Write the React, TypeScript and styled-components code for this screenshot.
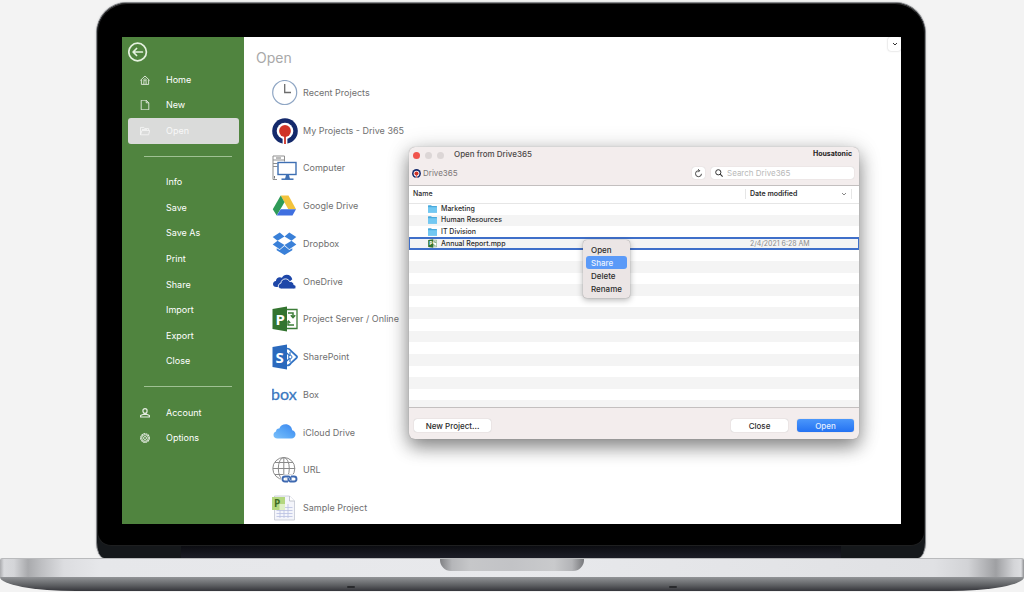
import React from "react";
import styled, { createGlobalStyle, css } from "styled-components";

const GlobalStyle = createGlobalStyle`
  * { box-sizing: border-box; }
  body { margin: 0; background: #f3f3f3; font-family: Inter, "Liberation Sans", sans-serif; }
  button, input { font-family: inherit; margin: 0; border: 0; padding: 0; }
  button { background: none; text-align: left; }
  ul { list-style: none; margin: 0; padding: 0; }
  svg { display: block; flex: none; }
`;

/* ---------- Laptop ---------- */

const Laptop = styled.div`
  padding-top: 2px;
  overflow: hidden;
`;

const Lid = styled.div`
  margin: 0 98px 0 96px;
  background: #15181b;
  border: 1px solid #85878a;
  border-bottom: 0;
  border-radius: 31px 31px 8px 8px / 31px 31px 16px 16px;
  box-shadow: 0 0 2px #c4c4c6;
`;

const Bezel = styled.div`
  background: #000;
  border: 1px solid #1e1f20;
  border-top-color: #333;
  border-radius: 30px 30px 14px 14px;
  padding: 33px 23px 21px 24px;
`;

const Hinge = styled.div`
  height: 12px;
  margin: 0 84px;
  background: linear-gradient(#0c0d12, #1c1d26);
`;

const Deck = styled.div`
  height: 19px;
  border-top: 1px solid #b9babc;
  border-radius: 2px 2px 0 0;
  background: linear-gradient(90deg, #aaabae 0, #d9dadd 4px, #d4d5d8 14px, #a9aaad 28px, #bfc0c3 42px, #dcdde0 64px, #e6e7ea 100px, #e8e9ec 50%, #e0e1e4 calc(100% - 90px), #d2d3d6 calc(100% - 56px), #9fa0a3 calc(100% - 28px), #d4d5d8 calc(100% - 10px), #dcdde0 calc(100% - 3px), #8f9093 100%);
`;

const Notch = styled.div`
  width: 144px;
  height: 12px;
  margin: 0 auto;
  border-radius: 0 0 11px 11px;
  background: linear-gradient(90deg, #808184, #b5b6b9 12px, #c6c7c9 30px, #c2c3c6 50%, #c9cacc 114px, #b3b4b7 132px, #77787b);
`;

const Underside = styled.div`
  display: flex;
  justify-content: space-between;
  align-items: flex-end;
  height: 14px;
  padding: 0 347px 3px;
  border-radius: 0 0 76px 76px / 0 0 14px 14px;
  background: linear-gradient(#929497, #5d5f62 60%, #34353a);
`;

const Foot = styled.span`
  width: 8px;
  height: 2px;
  border-radius: 4px;
  background: #292a2d;
`;

/* ---------- Application ---------- */

const Screen = styled.main`
  position: relative;
  display: flex;
  height: 487px;
  overflow: hidden;
  background: #fff;
`;

const Sidebar = styled.aside`
  flex: none;
  width: 122px;
  padding: 5px 5px 0 6px;
  background: #50843f;
`;

const BackButton = styled.button`
  display: block;
  height: 20px;
  color: #e4f1df;
`;

const NavList = styled.ul`
  display: grid;
  grid-auto-rows: 1fr;
  height: 384px;
  margin-top: 5px;
`;

const NavCell = styled.li`
  display: flex;
  align-items: center;
`;

const NavLink = styled.a<{ $active?: boolean }>`
  display: grid;
  grid-template-columns: 10px 1fr;
  column-gap: 16px;
  align-items: center;
  align-self: stretch;
  width: 100%;
  padding-left: 12px;
  border-radius: 3px;
  font-size: 9px;
  line-height: 12px;
  color: #fff;
  text-decoration: none;
  ${(p) => p.$active && css`background: #dadbda; color: #f8f8f8;`}
`;

const NavRule = styled.hr`
  width: 88px;
  margin: 0 0 0 16px;
  border: 0;
  border-top: 1px solid #9fc193;
`;

const Places = styled.section`
  flex: 1;
  padding: 13px 0 0 12px;
`;

const Heading = styled.h1`
  margin: 0;
  font-size: 14px;
  line-height: 16px;
  font-weight: 400;
  color: #a9a9a9;
`;

const PlaceList = styled.ul`
  display: grid;
  grid-auto-rows: 1fr;
  height: 453px;
  margin-top: 8px;
  padding-left: 16px;
`;

const Place = styled.button`
  display: flex;
  align-items: center;
  gap: 5px;
  height: 100%;
  font-size: 9px;
  line-height: 12px;
  color: #6f6f6f;
`;

const CollapseButton = styled.button`
  display: grid;
  place-items: center;
  align-self: flex-start;
  width: 13px;
  height: 14px;
  border-radius: 3px;
  background: #fff;
  box-shadow: 0 0 2px #bbb;
  color: #333;
`;

/* ---------- Dialog window ---------- */

const Dialog = styled.section`
  position: absolute;
  top: 110px;
  left: 287px;
  right: 42px;
  border-radius: 6px;
  background: #f3eded;
  color: #2c2c2c;
  font-size: 7px;
  line-height: 10px;
  box-shadow: 0 0 1px #8a8a8a, 0 8px 18px rgba(0, 0, 0, 0.42), 0 2px 24px rgba(0, 0, 0, 0.16);
`;

const TitleBar = styled.header`
  display: flex;
  align-items: flex-start;
  height: 15px;
  padding: 2px 7px 0 4px;
`;

const Lights = styled.div`
  display: flex;
  gap: 5px;
  margin: 3px 10px 0 0;
`;

const Light = styled.button<{ $color: string }>`
  width: 7px;
  height: 7px;
  border-radius: 50%;
  background: ${(p) => p.$color};
`;

const DialogTitle = styled.h2`
  flex: 1;
  margin: 0;
  font-size: 8px;
  font-weight: 500;
  color: #4b4747;
`;

const Brand = styled.strong`
  font-size: 7px;
  font-weight: 700;
  color: #262323;
`;

const ToolBar = styled.div`
  display: flex;
  align-items: center;
  height: 23px;
  padding: 0 5px 1px 3px;
`;

const Crumb = styled.span`
  display: flex;
  flex: 1;
  align-items: center;
  gap: 2px;
  font-size: 8px;
  color: #7c7777;
`;

const RefreshButton = styled.button`
  display: grid;
  place-items: center;
  width: 13px;
  height: 12px;
  margin-right: 6px;
  border-radius: 3px;
  background: #fff;
  box-shadow: 0 0 1px #bbb;
`;

const SearchField = styled.label`
  display: flex;
  align-items: center;
  gap: 4px;
  width: 143px;
  height: 12px;
  padding-left: 4px;
  border-radius: 3px;
  background: #fff;
  box-shadow: 0 0 1px #bbb;
`;

const SearchInput = styled.input`
  flex: 1;
  min-width: 0;
  height: 10px;
  background: none;
  font-size: 8px;
  line-height: 10px;
  &::placeholder { color: #b9b9b9; }
`;

const FileArea = styled.div`
  height: 223px;
  overflow: hidden;
  border: 1px solid #c3bfbf;
  border-width: 1px 0;
  background: #fff;
`;

const FileTable = styled.table`
  width: 100%;
  height: 226px;
  border-collapse: collapse;
  table-layout: fixed;
  th, td { padding: 0; text-align: left; line-height: 10px; }
`;

const HeadRow = styled.tr`
  height: 17px;
  th { border-bottom: 1px solid #e6e6e6; font-weight: 500; padding-left: 4px; }
`;

const DateHead = styled.th`
  width: 114px;
  font-size: 7px;
  span {
    display: flex;
    align-items: center;
    justify-content: space-between;
    margin: 0 7px 0 -4px;
    padding: 0 4px;
    border: 1px solid #e6e6e6;
    border-width: 0 1px;
    font-weight: 600;
  }
  svg { color: #888; }
`;

const FileRow = styled.tr<{ $selected?: boolean }>`
  height: 11px;
  &:nth-child(even) { background: #f4f4f4; }
  ${(p) => p.$selected && css`outline: 2px solid #3f6fc9; outline-offset: -1px;`}
`;

const FileName = styled.span`
  display: flex;
  align-items: center;
  gap: 4px;
  padding-left: 19px;
  font-weight: 500;
`;

const DateCell = styled.td`
  color: #8b8b8b;
  span { padding-left: 5px; }
`;

const Footer = styled.footer`
  display: flex;
  align-items: center;
  gap: 9px;
  height: 31px;
  padding: 4px 5px 0;
`;

const PushButton = styled.button<{ $primary?: boolean; $wide?: boolean }>`
  width: ${(p) => (p.$wide ? 77 : 57)}px;
  height: 13px;
  border-radius: 3px;
  background: ${(p) => (p.$primary ? "linear-gradient(#4b97fb, #2472f2)" : "#fff")};
  color: ${(p) => (p.$primary ? "#e4efff" : "#2c2c2c")};
  box-shadow: 0 0 1px #a5a5a5;
  font-size: 8px;
  line-height: 10px;
  font-weight: 500;
  text-align: center;
`;

const Spacer = styled.span`
  flex: 1;
`;

const ContextMenu = styled.ul`
  position: absolute;
  top: 93px;
  left: 174px;
  width: 47px;
  padding: 3px;
  border-radius: 4px;
  background: #ebe5e5;
  box-shadow: 0 0 1px #777, 0 2px 6px rgba(0, 0, 0, 0.3);
`;

const MenuButton = styled.button<{ $active?: boolean }>`
  display: block;
  width: 100%;
  height: 13px;
  padding-left: 5px;
  border-radius: 3px;
  background: ${(p) => (p.$active ? "#5b9af8" : "none")};
  color: ${(p) => (p.$active ? "#eaf3ff" : "#2c2c2c")};
  font-size: 8px;
  line-height: 10px;
  font-weight: 500;
`;

/* ---------- Icons ---------- */

const Icon = ({ size = 26, box = 26, children }: { size?: number; box?: number; children?: React.ReactNode }) => (
  <svg width={size} height={size} viewBox={`0 0 ${box} ${box}`} fill="none" aria-hidden="true">{children}</svg>
);

const BackIcon = () => (
  <Icon size={20} box={20}>
    <g stroke="currentColor" strokeWidth="1.7" strokeLinecap="round" strokeLinejoin="round">
      <circle cx="9.600" cy="10" r="8.800" /><path d="M14.400 10H5.200M8.600 6.500 5.100 10l3.500 3.500" />
    </g>
  </Icon>
);

const navIcons: Record<string, React.ReactNode> = {
  Home: <path d="M.4 5.400 5 1l4.600 4.400M1.400 4.800v4.600h7.200V4.800M3.900 9.200V6.600a1.100 1.100 0 0 1 2.200 0v2.600M2.800 5.600 5 3.600l2.200 2" />,
  New: <path d="M1.200.2h5l2.600 2.600v7H1.200zM6.200.4v2.400h2.400" />,
  Open: <path d="M.5 8.800V1.400h3.300l1 1.200h3.800v1.800M.5 8.800l1.500-4.400h7.700L8.600 8.800zM2 3.400h5" />,
  Account: <path d="M5 .6a2.100 2.100 0 0 1 2.100 2.100c0 1.400-.9 2.600-2.100 2.600S2.900 4.100 2.900 2.700A2.100 2.100 0 0 1 5 .6zM.6 9V7.500l2.800-1.200h3.200l2.800 1.200V9z" strokeWidth="1.200" />,
  Options: <><circle cx="5" cy="5" r="4.300" strokeDasharray="1.800 .45" strokeWidth="1.200" /><circle cx="5" cy="5" r="3.300" /><circle cx="5" cy="5" r="1.500" /></>,
};

const NavIcon = ({ name }: { name: string }) => (
  <Icon size={10} box={10}><g stroke="currentColor" strokeWidth=".9" strokeLinejoin="round" opacity=".85">{navIcons[name]}</g></Icon>
);

const DriveMark = ({ size = 26 }: { size?: number }) => (
  <Icon size={size}>
    <circle cx="13" cy="13" r="12.800" fill="#14296b" />
    <circle cx="13" cy="13" r="8.300" fill="#fff" />
    <path d="M10.600 17h4.800v9h-4.800z" fill="#fff" />
    <circle cx="13" cy="13" r="5.900" fill="#cf3327" />
    <path d="M12.100 17h1.800v9h-1.800z" fill="#cf3327" />
  </Icon>
);

const ProjectShape = () => (
  <>
    <path d="M14 3.500h11v19H14" fill="#fff" stroke="#3c7d38" strokeWidth="1.300" />
    <path d="M16 7h5v4M18.800 9.200 21 11.600l2.200-2.400M22 19h-6v-4M18.200 17 16 14.600" stroke="#3c7d38" strokeWidth="1.500" />
    <path d="M.5 3 15 .5v25L.5 23z" fill="#33742f" />
    <text x="3.500" y="18.500" fontFamily="Open Sans, sans-serif" fontSize="15" fontWeight="700" fill="#fff">P</text>
  </>
);

const FolderIcon = () => (
  <svg width="9" height="8" viewBox="0 0 9 8" aria-hidden="true">
    <path d="M0 .8Q0 .3.500.3h2.600l.8.800h4.600q.5 0 .5.500V7.600H0z" fill="#48a9dc" />
    <path d="M0 2.200h9v5.500H0z" fill="#72c8f2" />
  </svg>
);

const ProjectFileIcon = () => <Icon size={9}><ProjectShape /></Icon>;

const ChevronIcon = () => (
  <Icon size={6} box={6}><path d="m1 2 2 2 2-2" stroke="currentColor" strokeWidth="1" /></Icon>
);

const RefreshIcon = () => (
  <Icon size={9} box={9}><path d="M7.500 4.800a3 3 0 1 1-3-3.100h1M4.200.2l1.500 1.500-1.500 1.500" stroke="#333" strokeWidth=".9" /></Icon>
);

const SearchIcon = () => (
  <Icon size={8} box={8}><circle cx="3.300" cy="3.300" r="2.600" stroke="#333" /><path d="m5.200 5.200 2.400 2.400" stroke="#333" strokeWidth="1.100" /></Icon>
);

/* ---------- Data ---------- */

const places: { label: string; icon: React.ReactNode }[] = [
  { label: "Recent Projects", icon: <Icon><circle cx="12.700" cy="12.500" r="12" stroke="#8fa6c4" strokeWidth="1.200" /><path d="M12.700 4v8.500h6.300" stroke="#6c6c6c" strokeWidth="1.300" /></Icon> },
  { label: "My Projects - Drive 365", icon: <DriveMark /> },
  { label: "Computer", icon: (
    <Icon>
      <path d="M5 24.500H1V1h11.500v5.500M1 5h11.500M1 8.500h4.500M1 11.500h4.500" stroke="#8f8f8f" strokeWidth="1" />
      <path d="M4 3h5M2.500 21v2.500" stroke="#777" />
      <rect x="6" y="7.500" width="18" height="12" fill="#fff" stroke="#3e6fb3" strokeWidth="1.400" />
      <path d="M9.500 24.200h12" stroke="#3e6fb3" strokeWidth="1.500" />
      <path d="M14 20h3l1 4h-5z" fill="#3e6fb3" />
    </Icon>
  ) },
  { label: "Google Drive", icon: (
    <Icon>
      <path d="M8.700 2.500h7.800L24 16.200h-7.700z" fill="#f3c33c" />
      <path d="M8.700 2.500 12.500 9.300 4.700 22.500.8 16.300z" fill="#2f9b58" />
      <path d="M8.700 16.200H24l-3.500 6.300H4.700z" fill="#3f6fe0" />
    </Icon>
  ) },
  { label: "Dropbox", icon: (
    <Icon>
      <g fill="#3a80d8">
        <path d="M7.700 1.500 12.500 5.500 5.500 9.800.7 6z" /><path d="M17.300 1.500 12.500 5.500l7 4.300L24.300 6z" />
        <path d="M5.500 9.800 12.500 14l-4.800 4.200L.7 13.600z" /><path d="m19.500 9.800-7 4.200 4.800 4.200 7-4.600z" />
        <path d="m12.500 15 4.800 4 3-1.700v1.900L12.500 24l-7.800-4.800v-1.900l3 1.700z" />
      </g>
    </Icon>
  ) },
  { label: "OneDrive", icon: (
    <Icon>
      <path d="M4.500 18c-2.300 0-3.500-1.300-3.500-3 0-1.600 1.200-2.900 2.900-3.100.1-2.200 1.900-3.700 4-3.700.8 0 1.400.2 2 .5 1.100-1.900 2.800-2.900 4.800-2.900 2.900 0 5 1.900 5.600 4.500L11.500 18z" fill="#1d46a8" />
      <path d="M9.500 20c-2 0-3.200-1.200-3.200-2.800 0-1.600 1.100-2.800 2.600-3 .1-2.600 2.100-4.300 4.500-4.300 1.900 0 3.400 1 4.200 2.600 2.500-.3 4.200 1.200 4.300 3.200 1.400.3 2.100 1.100 2.100 2.200 0 1.300-1 2.100-2.300 2.100z" fill="#1d46a8" stroke="#fff" strokeWidth=".9" />
    </Icon>
  ) },
  { label: "Project Server / Online", icon: <Icon><ProjectShape /></Icon> },
  { label: "SharePoint", icon: (
    <Icon>
      <path d="M15 4.500c2 0 3 .5 4 2.500l5.500 5c.8.700.8 1.300 0 2L19 19c-1 2-2 2.500-4 2.500" stroke="#3273c4" strokeWidth="1.700" />
      <path d="m15 9 3.500 4-3.500 4M18 8v10" stroke="#3273c4" strokeWidth="1.200" />
      <circle cx="18.300" cy="13" r="1.700" fill="#fff" stroke="#3273c4" />
      <path d="M.5 3 15 .5v25L.5 23z" fill="#2a69bd" />
      <text x="3.500" y="18.500" fontFamily="Open Sans, sans-serif" fontSize="15" fontWeight="700" fill="#fff">S</text>
    </Icon>
  ) },
  { label: "Box", icon: <Icon><text x="-1" y="18" fontFamily="Lato, sans-serif" fontSize="16" fill="#3a78bf" stroke="#3a78bf" strokeWidth=".3">box</text></Icon> },
  { label: "iCloud Drive", icon: (
    <Icon>
      <defs><linearGradient id="cloud" x1="0" y1="1" x2="1" y2="0"><stop stopColor="#7cc0fa" /><stop offset=".5" stopColor="#57a5f6" /><stop offset="1" stopColor="#3a84ee" /></linearGradient></defs>
      <path d="M5.500 18.500c-2.500 0-4-1.500-4-3.600 0-1.700 1-3 2.500-3.400C4.100 9.300 5.500 8.300 7.300 8.500 8.500 5.700 10.800 4.300 13.500 4.300c3.700 0 6.300 2.500 6.700 5.900 2 .6 3.300 2 3.300 4.100 0 2.500-1.700 4.200-4.200 4.200z" fill="url(#cloud)" />
    </Icon>
  ) },
  { label: "URL", icon: (
    <Icon>
      <g stroke="#8b8b8b" strokeWidth="1"><circle cx="11.800" cy="11.500" r="11" /><ellipse cx="11.800" cy="11.500" rx="5.500" ry="11" /><path d="M11.800.5v22M1 11.500h22M3 5.500h18M3 17.500h18" /></g>
      <g stroke="#fff" strokeWidth="4.500"><rect x="11" y="19.500" width="7.500" height="5" rx="2.500" /><rect x="17" y="19.500" width="7.500" height="5" rx="2.500" /></g>
      <path d="M16 24.500h-3a2.500 2.500 0 0 1 0-5h3.500a2.500 2.500 0 0 1 2 3.500M19 19.500h3a2.500 2.500 0 0 1 0 5h-3.500a2.500 2.500 0 0 1-2-3.500" stroke="#3e69b0" strokeWidth="1.900" />
    </Icon>
  ) },
  { label: "Sample Project", icon: (
    <Icon>
      <path d="M2.500 1h15l5 5v19h-20z" fill="#f4f5fb" stroke="#c3c7d2" strokeWidth=".8" />
      <path d="M17.500 1v5h5" fill="#fff" stroke="#b6bac4" strokeWidth=".8" />
      <path d="M4.500 12.500h16M4.500 15.500h16M4.500 18.500h16M4.500 21.500h16M8 11v12M12 9v14M16 9v14" stroke="#b9c0e2" strokeWidth=".8" />
      <path d="M0 2h13v13H0z" fill="#b4d77f" />
      <path d="M7.500 9H13v6H7.500z" fill="#dff0c6" />
      <text x="2" y="11.500" fontFamily="Open Sans, sans-serif" fontSize="10" fontWeight="700" fill="#3d6b23">P</text>
    </Icon>
  ) },
];

const navItems = ["Home", "New", "Open", null, "Info", "Save", "Save As", "Print", "Share", "Import", "Export", "Close", null, "Account", "Options"];

const files = [
  { name: "Marketing", folder: true, date: "" },
  { name: "Human Resources", folder: true, date: "" },
  { name: "IT Division", folder: true, date: "" },
  { name: "Annual Report.mpp", folder: false, date: "2/4/2021 6:28 AM" },
];

const blankRows = Array.from({ length: 14 }, (_, i) => i);

export default function App() {
  return (
    <>
      <GlobalStyle />
      <Laptop>
        <Lid>
          <Bezel>
            <Screen>
              <Sidebar>
                <BackButton aria-label="Back"><BackIcon /></BackButton>
                <nav>
                  <NavList>
                    {navItems.map((name, i) => (
                      <NavCell key={i}>
                        {name ? (
                          <NavLink href="#" $active={name === "Open"}><NavIcon name={name} />{name}</NavLink>
                        ) : <NavRule />}
                      </NavCell>
                    ))}
                  </NavList>
                </nav>
              </Sidebar>
              <Places>
                <Heading>Open</Heading>
                <PlaceList>
                  {places.map((p) => (
                    <li key={p.label}><Place>{p.icon}{p.label}</Place></li>
                  ))}
                </PlaceList>
              </Places>
              <CollapseButton aria-label="Collapse"><ChevronIcon /></CollapseButton>

              <Dialog role="dialog" aria-labelledby="dialog-title">
                <TitleBar>
                  <Lights>
                    <Light $color="#f0544c" aria-label="Close window" />
                    <Light $color="#dcd6d6" aria-label="Minimize window" />
                    <Light $color="#dcd6d6" aria-label="Zoom window" />
                  </Lights>
                  <DialogTitle id="dialog-title">Open from Drive365</DialogTitle>
                  <Brand>Housatonic</Brand>
                </TitleBar>
                <ToolBar>
                  <Crumb><DriveMark size={9} />Drive365</Crumb>
                  <RefreshButton aria-label="Refresh"><RefreshIcon /></RefreshButton>
                  <SearchField>
                    <SearchIcon />
                    <SearchInput type="text" placeholder="Search Drive365" aria-label="Search Drive365" />
                  </SearchField>
                </ToolBar>
                <FileArea>
                  <FileTable>
                    <thead>
                      <HeadRow>
                        <th>Name</th>
                        <DateHead><span>Date modified <ChevronIcon /></span></DateHead>
                      </HeadRow>
                    </thead>
                    <tbody>
                      {files.map((f) => (
                        <FileRow key={f.name} $selected={!f.folder}>
                          <td><FileName>{f.folder ? <FolderIcon /> : <ProjectFileIcon />}{f.name}</FileName></td>
                          <DateCell><span>{f.date}</span></DateCell>
                        </FileRow>
                      ))}
                      {blankRows.map((i) => (
                        <FileRow key={i}><td colSpan={2} /></FileRow>
                      ))}
                    </tbody>
                  </FileTable>
                </FileArea>
                <Footer>
                  <PushButton $wide>New Project...</PushButton>
                  <Spacer />
                  <PushButton>Close</PushButton>
                  <PushButton $primary>Open</PushButton>
                </Footer>
                <ContextMenu>
                  {["Open", "Share", "Delete", "Rename"].map((item) => (
                    <li key={item}><MenuButton $active={item === "Share"}>{item}</MenuButton></li>
                  ))}
                </ContextMenu>
              </Dialog>
            </Screen>
          </Bezel>
          <Hinge />
        </Lid>
        <Deck><Notch /></Deck>
        <Underside><Foot /><Foot /></Underside>
      </Laptop>
    </>
  );
}
